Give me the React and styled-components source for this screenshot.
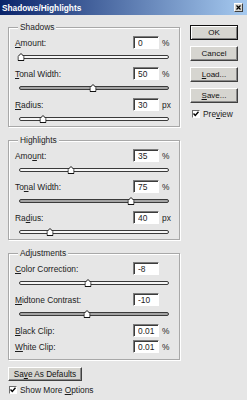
import React from 'react'
import styled, { createGlobalStyle } from 'styled-components'

const GlobalStyle = createGlobalStyle`
  html, body {
    margin: 0;
    padding: 0;
    background: #e6e6e6;
  }
  body {
    font-family: "Liberation Sans", Arial, sans-serif;
    font-size: 8.4px;
    color: #1c1c1c;
  }
`

const Window = styled.div`
  width: 247px;
  height: 400px;
  background: #e6e6e6;
  overflow: hidden;
`

const TitleBar = styled.div`
  height: 15px;
  display: flex;
  align-items: center;
  justify-content: space-between;
  padding: 0 4px 0 2px;
  background: linear-gradient(to right, #0a246a, #a6caf0);
`

const Title = styled.span`
  color: #fff;
  font-weight: bold;
  font-size: 8.3px;
`

const CloseButton = styled.div`
  width: 9px;
  height: 9px;
  box-sizing: border-box;
  display: grid;
  place-items: center;
  background: #d6d5d0;
  border: 1px solid;
  border-color: #fff #404040 #404040 #fff;
`

const Body = styled.div`
  display: flex;
  padding: 7px 0 0 8px;
`

const Main = styled.div`
  width: 172px;
  display: flex;
  flex-direction: column;
`

const Group = styled.fieldset`
  box-sizing: border-box;
  width: 172px;
  min-width: 0;
  margin: ${p => (p.$first ? 0 : 8)}px 0 0;
  padding: 4px 6px ${p => p.$pad ?? 1}px 6px;
  border: 1px solid #a8a8a8;
  box-shadow: inset 1px 1px 0 #fff, 1px 1px 0 #fff;
`

const Legend = styled.legend`
  margin-left: 3px;
  padding: 0 2px;
  font-size: 8.4px;
  line-height: 10px;
  background: #e6e6e6;
`

const Row = styled.div`
  display: flex;
  align-items: center;
  height: 13px;
  margin-top: ${p => p.$gap}px;
`

const Label = styled.span`
  flex: 1;
  white-space: nowrap;
`

const Field = styled.input`
  width: 26px;
  height: 13px;
  box-sizing: border-box;
  margin: 0;
  padding: 0 0 0 4px;
  font: inherit;
  color: #1c1c1c;
  background: #fff;
  border: 1px solid;
  border-color: #7c7c7c #fff #fff #7c7c7c;
  box-shadow: inset 1px 1px 0 #3c3c3c;
  outline: none;
`

const Unit = styled.span`
  width: 14px;
  padding-left: 3px;
  box-sizing: border-box;
`

const SliderWrap = styled.div`
  width: 150px;
  height: 14px;
  box-sizing: border-box;
  margin-left: 4px;
  padding-top: 6px;
`

const Track = styled.div`
  position: relative;
  height: 4px;
  box-sizing: border-box;
  border: 1px solid #3a3a3a;
  border-radius: 2px;
  background: ${p => (p.$filled ? '#a4a4a4' : '#f6f6f6')};
`

const Thumb = styled.svg`
  position: absolute;
  top: -3px;
  transform: translateX(-50%);
`

const Side = styled.div`
  width: 48px;
  margin: 3px 0 0 10px;
  display: flex;
  flex-direction: column;
  gap: 6px;
`

const Button = styled.button`
  width: ${p => p.$width || 48}px;
  height: ${p => p.$height || 15}px;
  margin: 0;
  padding: 0;
  box-sizing: border-box;
  font-family: inherit;
  font-size: 8px;
  color: #111;
  background: #d6d5d0;
  border: 1px solid;
  border-color: ${p => (p.$default ? '#111' : '#fff #404040 #404040 #fff')};
  box-shadow: ${p => (p.$default ? 'inset 1px 1px 0 #fff, inset -1px -1px 0 #808080' : 'inset -1px -1px 0 #8a8a8a')};
`

const FooterButton = styled(Button)`
  margin-top: 7px;
  font-size: 8.2px;
`

const CheckRow = styled.div`
  display: flex;
  align-items: center;
  gap: 3px;
  height: 10px;
  margin: ${p => p.$top || 0}px 0 0 ${p => p.$left || 0}px;
`

const CheckBox = styled.span`
  width: 8px;
  height: 8px;
  box-sizing: border-box;
  display: grid;
  place-items: center;
  background: #fff;
  border: 1px solid;
  border-color: #6c6c6c #fff #fff #6c6c6c;
`

const groups = [
  {
    title: 'Shadows',
    rows: [
      { label: '&Amount:', value: '0', unit: '%', pos: 0.01 },
      { label: '&Tonal Width:', value: '50', unit: '%', pos: 0.49, filled: true },
      { label: '&Radius:', value: '30', unit: 'px', pos: 0.153 },
    ],
  },
  {
    title: 'Highlights',
    rows: [
      { label: 'Amo&unt:', value: '35', unit: '%', pos: 0.347 },
      { label: 'To&nal Width:', value: '75', unit: '%', pos: 0.753, filled: true },
      { label: 'Ra&dius:', value: '40', unit: 'px', pos: 0.2 },
    ],
  },
  {
    title: 'Adjustments',
    pad: 6,
    rows: [
      { label: '&Color Correction:', value: '-8', pos: 0.46 },
      { label: '&Midtone Contrast:', value: '-10', pos: 0.453, filled: true },
      { label: '&Black Clip:', value: '0.01', unit: '%' },
      { label: '&White Clip:', value: '0.01', unit: '%', gap: 3 },
    ],
  },
]

// "&" marks the access key letter, as in a Windows resource
const Mnemonic = ({ text }) => {
  const i = text.indexOf('&')
  if (i < 0) return text
  return (
    <>
      {text.slice(0, i)}
      <u>{text[i + 1]}</u>
      {text.slice(i + 2)}
    </>
  )
}

const Check = () => (
  <CheckBox>
    <svg width="6" height="6" viewBox="0 0 6 6">
      <path d="M0.5 2.5 L2.3 4.5 L5.5 0.8" fill="none" stroke="#000" strokeWidth="1.4" />
    </svg>
  </CheckBox>
)

const Slider = ({ pos, filled }) => (
  <SliderWrap>
    <Track $filled={filled}>
      <Thumb width="7" height="8" viewBox="0 0 7 8" style={{ left: `${pos * 100}%` }}>
        <polygon points="0.5,3.5 3.5,0.5 6.5,3.5 6.5,7.5 0.5,7.5" fill="#fff" stroke="#111" />
      </Thumb>
    </Track>
  </SliderWrap>
)

const App = () => (
  <Window>
    <GlobalStyle />
    <TitleBar>
      <Title>Shadows/Highlights</Title>
      <CloseButton>
        <svg width="5" height="5" viewBox="0 0 5 5">
          <path d="M0.5 0.5 L4.5 4.5 M4.5 0.5 L0.5 4.5" stroke="#000" strokeWidth="1.2" />
        </svg>
      </CloseButton>
    </TitleBar>
    <Body>
      <Main>
        {groups.map((group, gi) => (
          <Group key={group.title} $first={gi === 0} $pad={group.pad}>
            <Legend>{group.title}</Legend>
            {group.rows.map((row, ri) => (
              <React.Fragment key={row.label}>
                <Row $gap={ri === 0 ? 0 : row.gap ?? 4}>
                  <Label><Mnemonic text={row.label} /></Label>
                  <Field value={row.value} readOnly />
                  <Unit>{row.unit}</Unit>
                </Row>
                {row.pos !== undefined && <Slider pos={row.pos} filled={row.filled} />}
              </React.Fragment>
            ))}
          </Group>
        ))}
        <FooterButton $width={74} $height={14}>
          <Mnemonic text="Sa&ve As Defaults" />
        </FooterButton>
        <CheckRow $top={4} $left={1}>
          <Check />
          <span>Show More <Mnemonic text="&Options" /></span>
        </CheckRow>
      </Main>
      <Side>
        <Button $default>OK</Button>
        <Button>Cancel</Button>
        <Button><Mnemonic text="&Load..." /></Button>
        <Button><Mnemonic text="&Save..." /></Button>
        <CheckRow $left={2}>
          <Check />
          <span><Mnemonic text="Pre&view" /></span>
        </CheckRow>
      </Side>
    </Body>
  </Window>
)

export default App
